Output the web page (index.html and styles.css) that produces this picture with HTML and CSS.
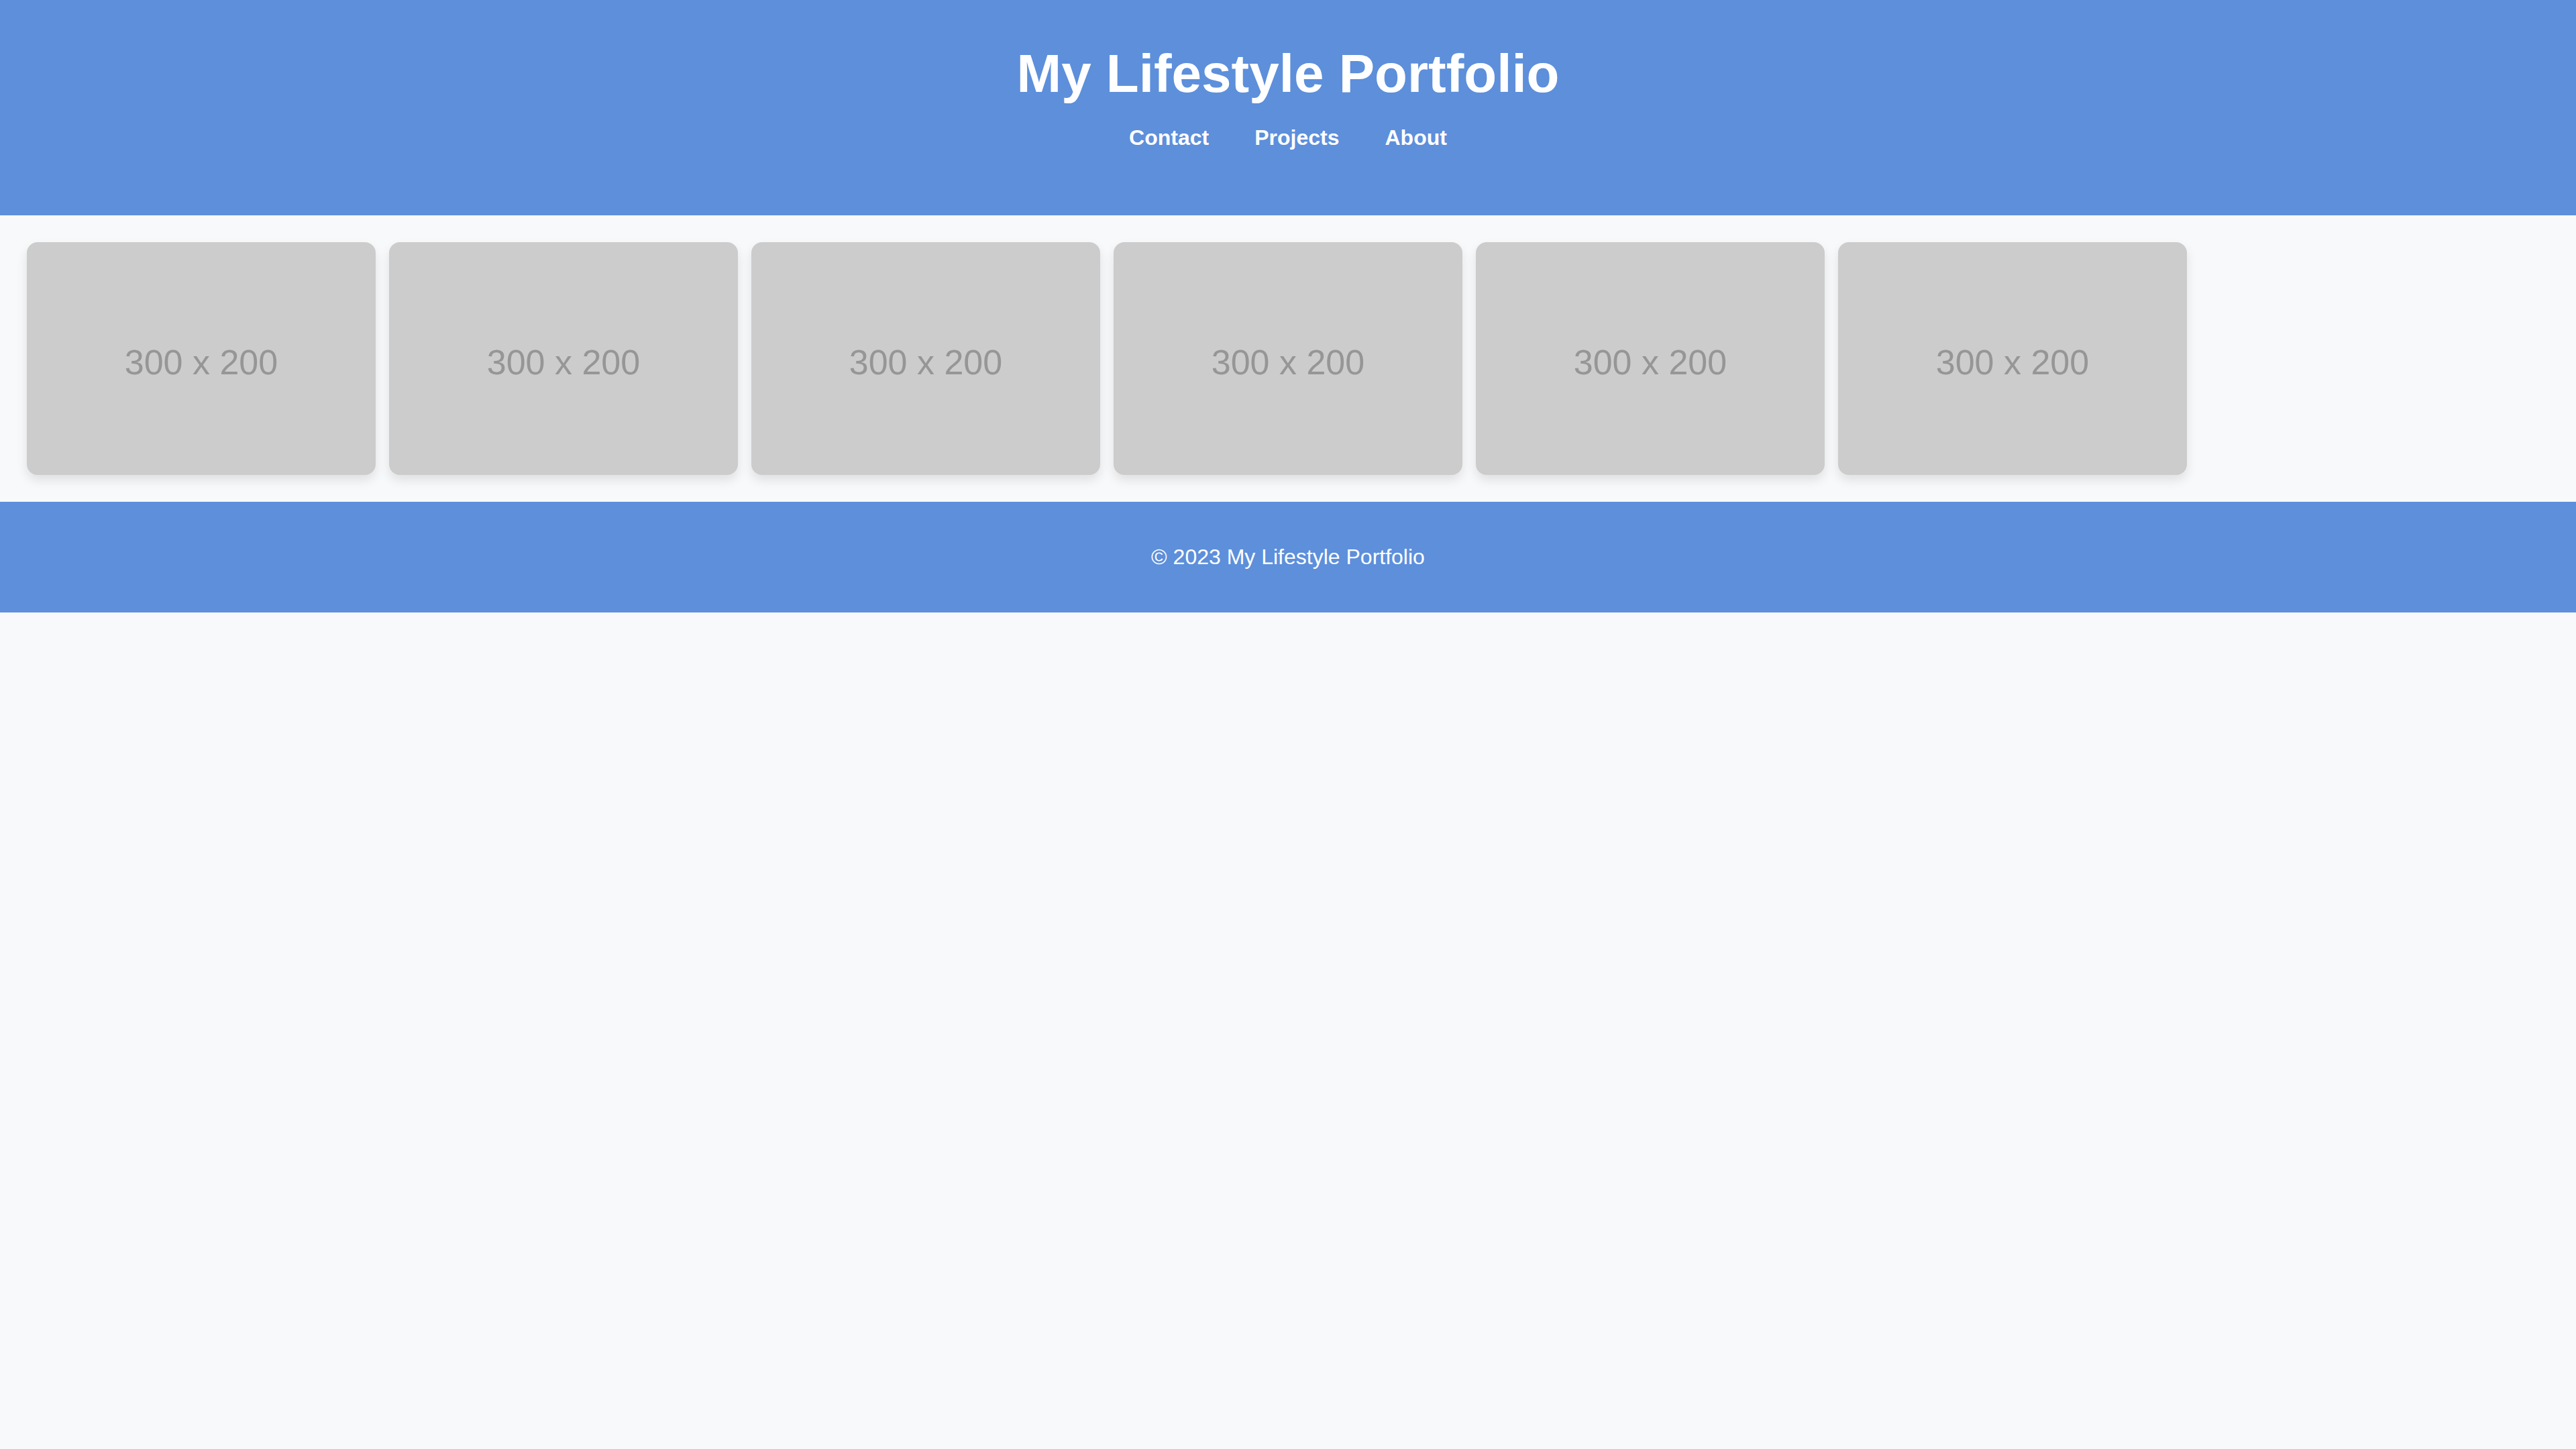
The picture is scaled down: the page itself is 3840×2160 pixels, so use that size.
FILE: index.html
```html
<!DOCTYPE html>
<html lang="en">
<head>
<meta charset="utf-8">
<title>My Lifestyle Portfolio</title>
<link rel="stylesheet" href="styles.css">
</head>
<body>
<header class="site-header">
  <h1 class="site-title">My Lifestyle Portfolio</h1>
  <nav class="site-nav">
    <a href="#contact">Contact</a>
    <a href="#projects">Projects</a>
    <a href="#about">About</a>
  </nav>
</header>
<main class="gallery">
  <div class="card"><span>300 x 200</span></div>
  <div class="card"><span>300 x 200</span></div>
  <div class="card"><span>300 x 200</span></div>
  <div class="card"><span>300 x 200</span></div>
  <div class="card"><span>300 x 200</span></div>
  <div class="card"><span>300 x 200</span></div>
</main>
<footer class="site-footer">
  <p>© 2023 My Lifestyle Portfolio</p>
</footer>
</body>
</html>
```

FILE: styles.css
```css
html, body {
  margin: 0;
  padding: 0;
}

body {
  background: #f8f9fa;
  font-family: "Liberation Sans", Arial, sans-serif;
  color: #333;
}

.site-header {
  background: #5d8fdb;
  color: #fff;
  text-align: center;
  padding: 64px 0 97px;
}

.site-title {
  margin: 0;
  font-size: 80px;
  font-weight: bold;
  line-height: normal;
}

.site-nav {
  margin-top: 31px;
  display: flex;
  justify-content: center;
  gap: 68px;
  font-size: 32px;
  line-height: normal;
}

.site-nav a {
  color: #fff;
  font-weight: bold;
  text-decoration: none;
}

.gallery {
  display: flex;
  flex-wrap: wrap;
  gap: 20px;
  padding: 40px;
}

.card {
  width: 520px;
  height: 346.67px;
  box-sizing: border-box;
  background: #cccccc;
  border-radius: 16px;
  box-shadow: 0 8px 16px rgba(0, 0, 0, 0.1);
  display: flex;
  align-items: center;
  justify-content: center;
  padding-top: 11px;
  color: #969696;
  font-size: 52px;
  line-height: normal;
}

.site-footer {
  background: #5d8fdb;
  color: #fff;
  text-align: center;
  padding: 64px 0;
}

.site-footer p {
  margin: 0;
  font-size: 32px;
  line-height: normal;
}
```
